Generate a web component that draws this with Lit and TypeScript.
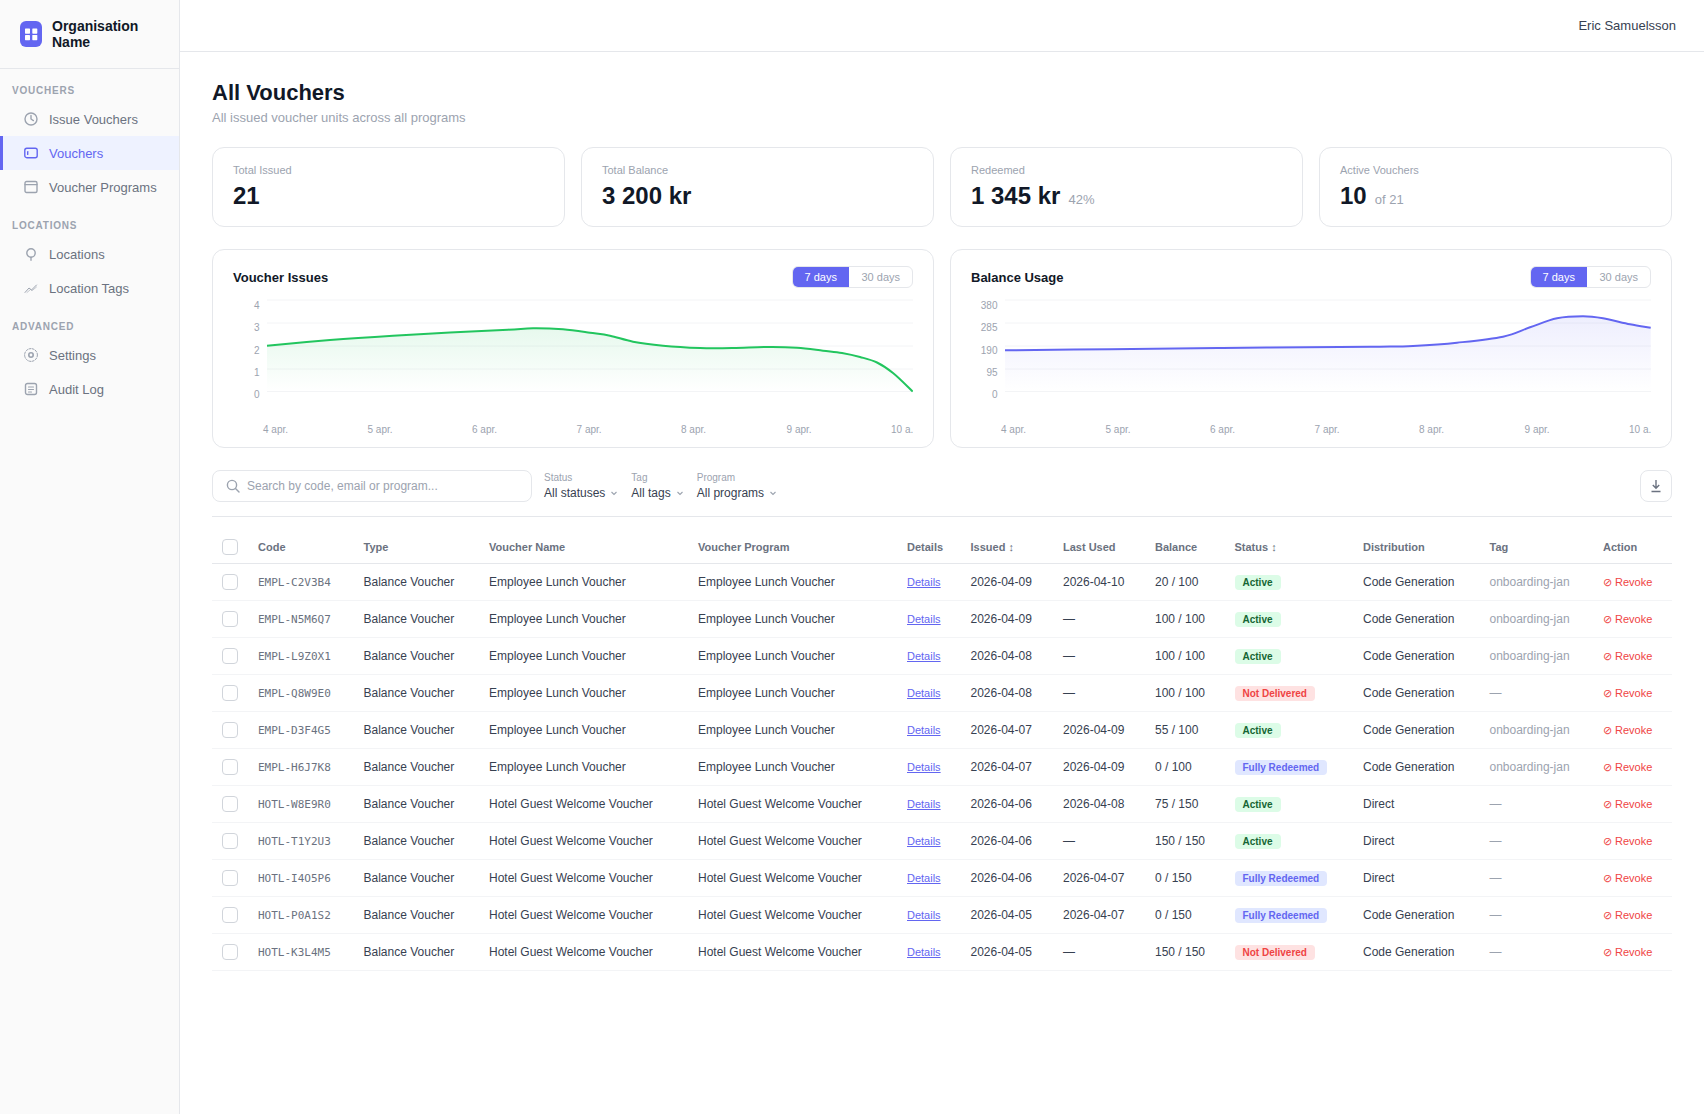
import { LitElement, html, css, svg } from "lit";
import { customElement } from "lit/decorators.js";

type Pt = [number, number];

const smooth = (p: Pt[]) => {
  let d = `M${p[0][0]} ${p[0][1]}`;
  for (let i = 0; i < p.length - 1; i++) {
    const a = p[Math.max(i - 1, 0)], b = p[i], c = p[i + 1], e = p[Math.min(i + 2, p.length - 1)];
    const c1: Pt = [b[0] + (c[0] - a[0]) / 6, b[1] + (c[1] - a[1]) / 6];
    const c2: Pt = [c[0] - (e[0] - b[0]) / 6, c[1] - (e[1] - b[1]) / 6];
    d += ` C${c1[0].toFixed(1)} ${c1[1].toFixed(1)} ${c2[0].toFixed(1)} ${c2[1].toFixed(1)} ${c[0]} ${c[1]}`;
  }
  return d;
};

const green: Pt[] = [[267,345.7],[330,340],[393,335.7],[450,332.5],[508,329.7],[533,328.3],[563,329.3],[590,332.7],[610,335.7],[633,341.7],[663,345.7],[700,348],[733,348],[767,347],[797,347.7],[823,350.7],[842,353],[860,357],[877,362.5],[893,373],[912.7,391.5]];
const blue: Pt[] = [[1005,350.3],[1110,349.2],[1223,348],[1340,347],[1380,346.7],[1413,346],[1457,342.7],[1503,336.7],[1530,327.3],[1557,318.3],[1583,316.3],[1603,318.3],[1630,324.3],[1650.7,327.7]];

const xLabels = ["4 apr.", "5 apr.", "6 apr.", "7 apr.", "8 apr.", "9 apr.", "10 a."];
const xStarts = [263, 367.5, 472, 576.6, 681, 786.6, 891];
const gridY = [300, 323, 346, 369, 391.5];
const tickY = [309, 331, 354, 376, 398];

const chart = (id: string, dx: number, pts: Pt[], color: string, ticks: string[]) => {
  const line = smooth(pts);
  const first = pts[0], last = pts[pts.length - 1];
  const area = `${line} L${last[0]} 391.5 L${first[0]} 391.5 Z`;
  return html`<svg class="plot" viewBox="${233 + dx} 296 680 144" width="680" height="144">
    <defs><linearGradient id=${id} x1="0" y1="0" x2="0" y2="1">
      <stop offset="0" stop-color=${color} stop-opacity="0.11"></stop>
      <stop offset="1" stop-color=${color} stop-opacity="0"></stop>
    </linearGradient></defs>
    ${gridY.map((y) => svg`<line x1=${267 + dx} x2=${913 + dx} y1=${y} y2=${y} stroke="#f3f4f6" stroke-width="1"></line>`)}
    <path d=${area} fill="url(#${id})"></path>
    <path d=${line} fill="none" stroke=${color} stroke-width="2" stroke-linejoin="round"></path>
    ${ticks.map((t, i) => svg`<text class="tick" x=${259.5 + dx} y=${tickY[i]} text-anchor="end">${t}</text>`)}
    ${xLabels.map((t, i) => svg`<text class="tick" x=${xStarts[i] + dx} y="432.5">${t}</text>`)}
  </svg>`;
};

const I = {
  clock: svg`<circle cx="7" cy="7" r="6"/><path d="M7 3.5V7l2.4 1.6"/>`,
  ticket: svg`<rect x="0.8" y="2.3" width="12.4" height="9.4" rx="2"/><path d="M3.7 5.6v2.8"/>`,
  cal: svg`<rect x="1" y="1.5" width="12" height="11" rx="1.5"/><path d="M1 4.6h12"/>`,
  pin: svg`<circle cx="7" cy="6" r="4.2"/><path d="M7 10.2v3"/>`,
  trend: svg`<path d="M1 11.5 5 7l2.5 2L12.5 4" stroke-width="1"/><path d="M3 11.5 6.5 8.5l1.5 1.2L12.5 6" stroke-width="0.6"/>`,
  gear: svg`<circle cx="7" cy="7" r="6.4" stroke-width="1" stroke-dasharray="2 1.4"/><circle cx="7" cy="7" r="2.2" stroke-width="1.6"/>`,
  log: svg`<rect x="1.5" y="1.5" width="11" height="11" rx="2"/><path d="M4.5 5h5M4.5 7.5h5M4.5 10h3" stroke-width="1.1"/>`,
};

const nav = [
  { label: "VOUCHERS", items: [["Issue Vouchers", I.clock], ["Vouchers", I.ticket, true], ["Voucher Programs", I.cal]] },
  { label: "LOCATIONS", items: [["Locations", I.pin], ["Location Tags", I.trend]] },
  { label: "ADVANCED", items: [["Settings", I.gear], ["Audit Log", I.log]] },
] as { label: string; items: [string, unknown, boolean?][] }[];

const stats = [
  ["Total Issued", "21", ""],
  ["Total Balance", "3 200 kr", ""],
  ["Redeemed", "1 345 kr", "42%"],
  ["Active Vouchers", "10", "of 21"],
];

const E = "Employee Lunch Voucher", H = "Hotel Guest Welcome Voucher", CG = "Code Generation", OJ = "onboarding-jan";
const rows = [
  ["EMPL-C2V3B4", E, "2026-04-09", "2026-04-10", "20 / 100", "Active", CG, OJ],
  ["EMPL-N5M6Q7", E, "2026-04-09", "—", "100 / 100", "Active", CG, OJ],
  ["EMPL-L9Z0X1", E, "2026-04-08", "—", "100 / 100", "Active", CG, OJ],
  ["EMPL-Q8W9E0", E, "2026-04-08", "—", "100 / 100", "Not Delivered", CG, "—"],
  ["EMPL-D3F4G5", E, "2026-04-07", "2026-04-09", "55 / 100", "Active", CG, OJ],
  ["EMPL-H6J7K8", E, "2026-04-07", "2026-04-09", "0 / 100", "Fully Redeemed", CG, OJ],
  ["HOTL-W8E9R0", H, "2026-04-06", "2026-04-08", "75 / 150", "Active", "Direct", "—"],
  ["HOTL-T1Y2U3", H, "2026-04-06", "—", "150 / 150", "Active", "Direct", "—"],
  ["HOTL-I4O5P6", H, "2026-04-06", "2026-04-07", "0 / 150", "Fully Redeemed", "Direct", "—"],
  ["HOTL-P0A1S2", H, "2026-04-05", "2026-04-07", "0 / 150", "Fully Redeemed", CG, "—"],
  ["HOTL-K3L4M5", H, "2026-04-05", "—", "150 / 150", "Not Delivered", CG, "—"],
];

const badge: Record<string, string> = { Active: "ok", "Not Delivered": "bad", "Fully Redeemed": "full" };
const heads = ["Code", "Type", "Voucher Name", "Voucher Program", "Details", "Issued ↕", "Last Used", "Balance", "Status ↕", "Distribution", "Tag", "Action"];
const filters = [["Status", "All statuses"], ["Tag", "All tags"], ["Program", "All programs"]];

@customElement("app-root")
export class AppRoot extends LitElement {
  static styles = css`
    :host { display: flex; min-height: 100vh; background: #fff; font-family: "Liberation Sans", Arial, sans-serif; color: #111827; }
    * { box-sizing: border-box; }
    .side { flex: none; width: 180px; background: #fafafa; border-right: 1px solid #e5e7eb; }
    .brand { display: flex; align-items: center; gap: 10px; height: 69px; padding: 0 12px 0 20px; border-bottom: 1px solid #e5e7eb; font-size: 14px; font-weight: 700; line-height: 16px; }
    .logo { flex: none; width: 22px; height: 26px; border-radius: 6px; background: #6366f1; display: grid; place-items: center; }
    .sec { padding-top: 16px; }
    .sec-label { padding-left: 12px; margin-bottom: 5px; font-size: 10px; font-weight: 700; line-height: 12px; letter-spacing: 0.8px; color: #9ca3af; }
    .item { display: flex; align-items: center; gap: 11px; height: 34px; padding-left: 24px; font-size: 13px; color: #6b7280; }
    .item svg { flex: none; fill: none; stroke: #9ca3af; stroke-width: 1.4; stroke-linecap: round; stroke-linejoin: round; }
    .item.on { background: #eef2ff; color: #6366f1; box-shadow: inset 3px 0 0 #6366f1; }
    .item.on svg { stroke: #6366f1; }
    .wrap { flex: 1; min-width: 0; }
    .top { display: flex; align-items: center; justify-content: flex-end; height: 52px; padding-right: 28px; border-bottom: 1px solid #e5e7eb; font-size: 13px; color: #374151; }
    .main { padding: 28px 32px 32px; }
    h1 { margin: 0; font-size: 22px; line-height: 25px; font-weight: 700; }
    .sub { margin: 5px 0 22px; font-size: 13px; line-height: 15px; color: #9ca3af; }
    .stats { display: grid; grid-template-columns: repeat(4, 1fr); gap: 16px; margin-bottom: 22px; }
    .card { background: #fff; border: 1px solid #e5e7eb; border-radius: 12px; }
    .stat { height: 80px; padding: 16px 20px 0; }
    .stat-l { font-size: 11px; line-height: 13px; color: #9ca3af; }
    .stat-v { display: flex; align-items: baseline; gap: 8px; margin-top: 5px; font-size: 24px; line-height: 28px; font-weight: 700; }
    .stat-v span { font-size: 13px; font-weight: 400; color: #9ca3af; }
    .charts { display: grid; grid-template-columns: 1fr 1fr; gap: 16px; margin-bottom: 22px; }
    .chart { height: 199px; padding: 16px 20px 0; }
    .chart-h { display: flex; align-items: center; justify-content: space-between; height: 22px; margin-bottom: 8px; font-size: 13px; font-weight: 700; }
    .toggle { display: flex; height: 22px; border: 1px solid #e5e7eb; border-radius: 6px; overflow: hidden; font-size: 11px; font-weight: 400; line-height: 20px; color: #9ca3af; }
    .toggle span { padding: 0 12px; }
    .toggle .act { margin: -1px 0 -1px -1px; padding: 1px 12.5px; background: #6366f1; color: #fff; }
    .plot { display: block; }
    .tick { font-size: 10px; fill: #9ca3af; }
    .bar { display: flex; align-items: center; height: 47px; padding-bottom: 14px; border-bottom: 1px solid #e5e7eb; margin-bottom: 14px; }
    .search { display: flex; align-items: center; gap: 7px; width: 320px; height: 32px; padding: 0 13px; border: 1px solid #e5e7eb; border-radius: 8px; }
    .search svg { flex: none; }
    .search input { flex: 1; min-width: 0; border: 0; outline: 0; padding: 0; background: none; font: 12px "Liberation Sans", Arial, sans-serif; color: #374151; }
    .search input::placeholder { color: #9ca3af; opacity: 1; }
    .filters { display: flex; gap: 12px; margin-left: 12px; }
    .f-l { font-size: 10px; line-height: 12px; color: #9ca3af; margin-bottom: 2px; }
    .f-v { display: flex; align-items: center; gap: 4px; font-size: 12px; line-height: 14px; color: #374151; }
    .dl { margin-left: auto; width: 32px; height: 32px; padding: 0; display: grid; place-items: center; border: 1px solid #e5e7eb; border-radius: 8px; background: #fff; }
    table { width: 100%; border-collapse: collapse; table-layout: fixed; font-size: 12px; color: #374151; }
    th { height: 32px; padding: 0 10px; text-align: left; font-size: 11px; font-weight: 700; color: #6b7280; border-bottom: 1px solid #e5e7eb; }
    td { height: 37px; padding: 0 10px; border-bottom: 1px solid #f3f4f6; white-space: nowrap; }
    .w0 { width: 36px; } .w1 { width: 105.5px; } .w2 { width: 125.5px; } .w3 { width: 209px; } .w4 { width: 209px; } .w5 { width: 63.5px; }
    .w6 { width: 92.5px; } .w7 { width: 92px; } .w8 { width: 79.5px; } .w9 { width: 128.5px; } .w10 { width: 126.5px; } .w11 { width: 113.5px; } .w12 { width: 79px; }
    .cb { display: block; appearance: none; margin: 0; width: 16px; height: 16px; border: 1px solid #d1d5db; border-radius: 4px; background: #fff; }
    .code { font-family: "DejaVu Sans Mono", monospace; font-size: 11px; color: #6b7280; }
    .link { font-size: 11px; color: #6366f1; text-decoration: underline; }
    .b { display: inline-block; vertical-align: -2px; height: 15px; padding: 0 8px; border-radius: 4px; font-size: 10px; font-weight: 700; line-height: 15px; }
    .ok { background: #dcfce7; color: #166534; }
    .bad { background: #fee2e2; color: #ef4444; }
    .full { background: #e0e7ff; color: #6366f1; }
    .muted { color: #9ca3af; }
    .rev { font-size: 11px; color: #ef4444; }
  `;

  render() {
    return html`
      <aside class="side">
        <div class="brand">
          <span class="logo"><svg width="13" height="13" viewBox="0 0 13 13" fill="#fff"><rect x="0" y="0.5" width="5" height="5.2" rx="0.6"/><rect x="7.3" y="0.5" width="5" height="5.2" rx="0.6"/><rect x="0" y="7" width="5" height="5.2" rx="0.6"/><rect x="7.3" y="7" width="5" height="5.2" rx="0.6"/></svg></span>
          <span>Organisation Name</span>
        </div>
        ${nav.map((s) => html`<div class="sec">
          <div class="sec-label">${s.label}</div>
          ${s.items.map(([t, ic, on]) => html`<div class="item ${on ? "on" : ""}"><svg width="14" height="14" viewBox="0 0 14 14">${ic}</svg>${t}</div>`)}
        </div>`)}
      </aside>
      <div class="wrap">
        <header class="top">Eric Samuelsson</header>
        <main class="main">
          <h1>All Vouchers</h1>
          <p class="sub">All issued voucher units across all programs</p>
          <section class="stats">
            ${stats.map(([l, v, s]) => html`<div class="card stat"><div class="stat-l">${l}</div><div class="stat-v">${v}${s ? html`<span>${s}</span>` : ""}</div></div>`)}
          </section>
          <section class="charts">
            <div class="card chart">
              <div class="chart-h">Voucher Issues<div class="toggle"><span class="act">7 days</span><span>30 days</span></div></div>
              ${chart("g1", 0, green, "#22c55e", ["4", "3", "2", "1", "0"])}
            </div>
            <div class="card chart">
              <div class="chart-h">Balance Usage<div class="toggle"><span class="act">7 days</span><span>30 days</span></div></div>
              ${chart("g2", 738, blue, "#6366f1", ["380", "285", "190", "95", "0"])}
            </div>
          </section>
          <section class="bar">
            <label class="search">
              <svg width="14" height="14" viewBox="0 0 14 14" fill="none" stroke="#9ca3af" stroke-width="1.4" stroke-linecap="round"><circle cx="6" cy="6" r="4.6"/><path d="M9.5 9.5 13 13"/></svg>
              <input placeholder="Search by code, email or program..." />
            </label>
            <div class="filters">
              ${filters.map(([l, v]) => html`<div><div class="f-l">${l}</div><div class="f-v">${v}<svg width="10" height="10" viewBox="0 0 10 10" fill="none" stroke="#9ca3af" stroke-width="1.1"><path d="M2.5 4 5 6.5 7.5 4"/></svg></div></div>`)}
            </div>
            <button class="dl" aria-label="Download"><svg width="14" height="14" viewBox="0 0 14 14" fill="none" stroke="#6b7280" stroke-width="1.4"><path d="M7 1V9M3.8 6 7 9.3 10.2 6M2.5 12.5h9"/></svg></button>
          </section>
          <table>
            <colgroup>${Array.from({ length: 13 }, (_, i) => html`<col class="w${i}" />`)}</colgroup>
            <thead><tr><th><input class="cb" type="checkbox" /></th>${heads.map((h) => html`<th>${h}</th>`)}</tr></thead>
            <tbody>
              ${rows.map((r) => html`<tr>
                <td><input class="cb" type="checkbox" /></td>
                <td><span class="code">${r[0]}</span></td>
                <td>Balance Voucher</td>
                <td>${r[1]}</td>
                <td>${r[1]}</td>
                <td><span class="link">Details</span></td>
                <td>${r[2]}</td>
                <td>${r[3]}</td>
                <td>${r[4]}</td>
                <td><span class="b ${badge[r[5]]}">${r[5]}</span></td>
                <td>${r[6]}</td>
                <td class="muted">${r[7]}</td>
                <td><span class="rev">⊘ Revoke</span></td>
              </tr>`)}
            </tbody>
          </table>
        </main>
      </div>
    `;
  }
}
